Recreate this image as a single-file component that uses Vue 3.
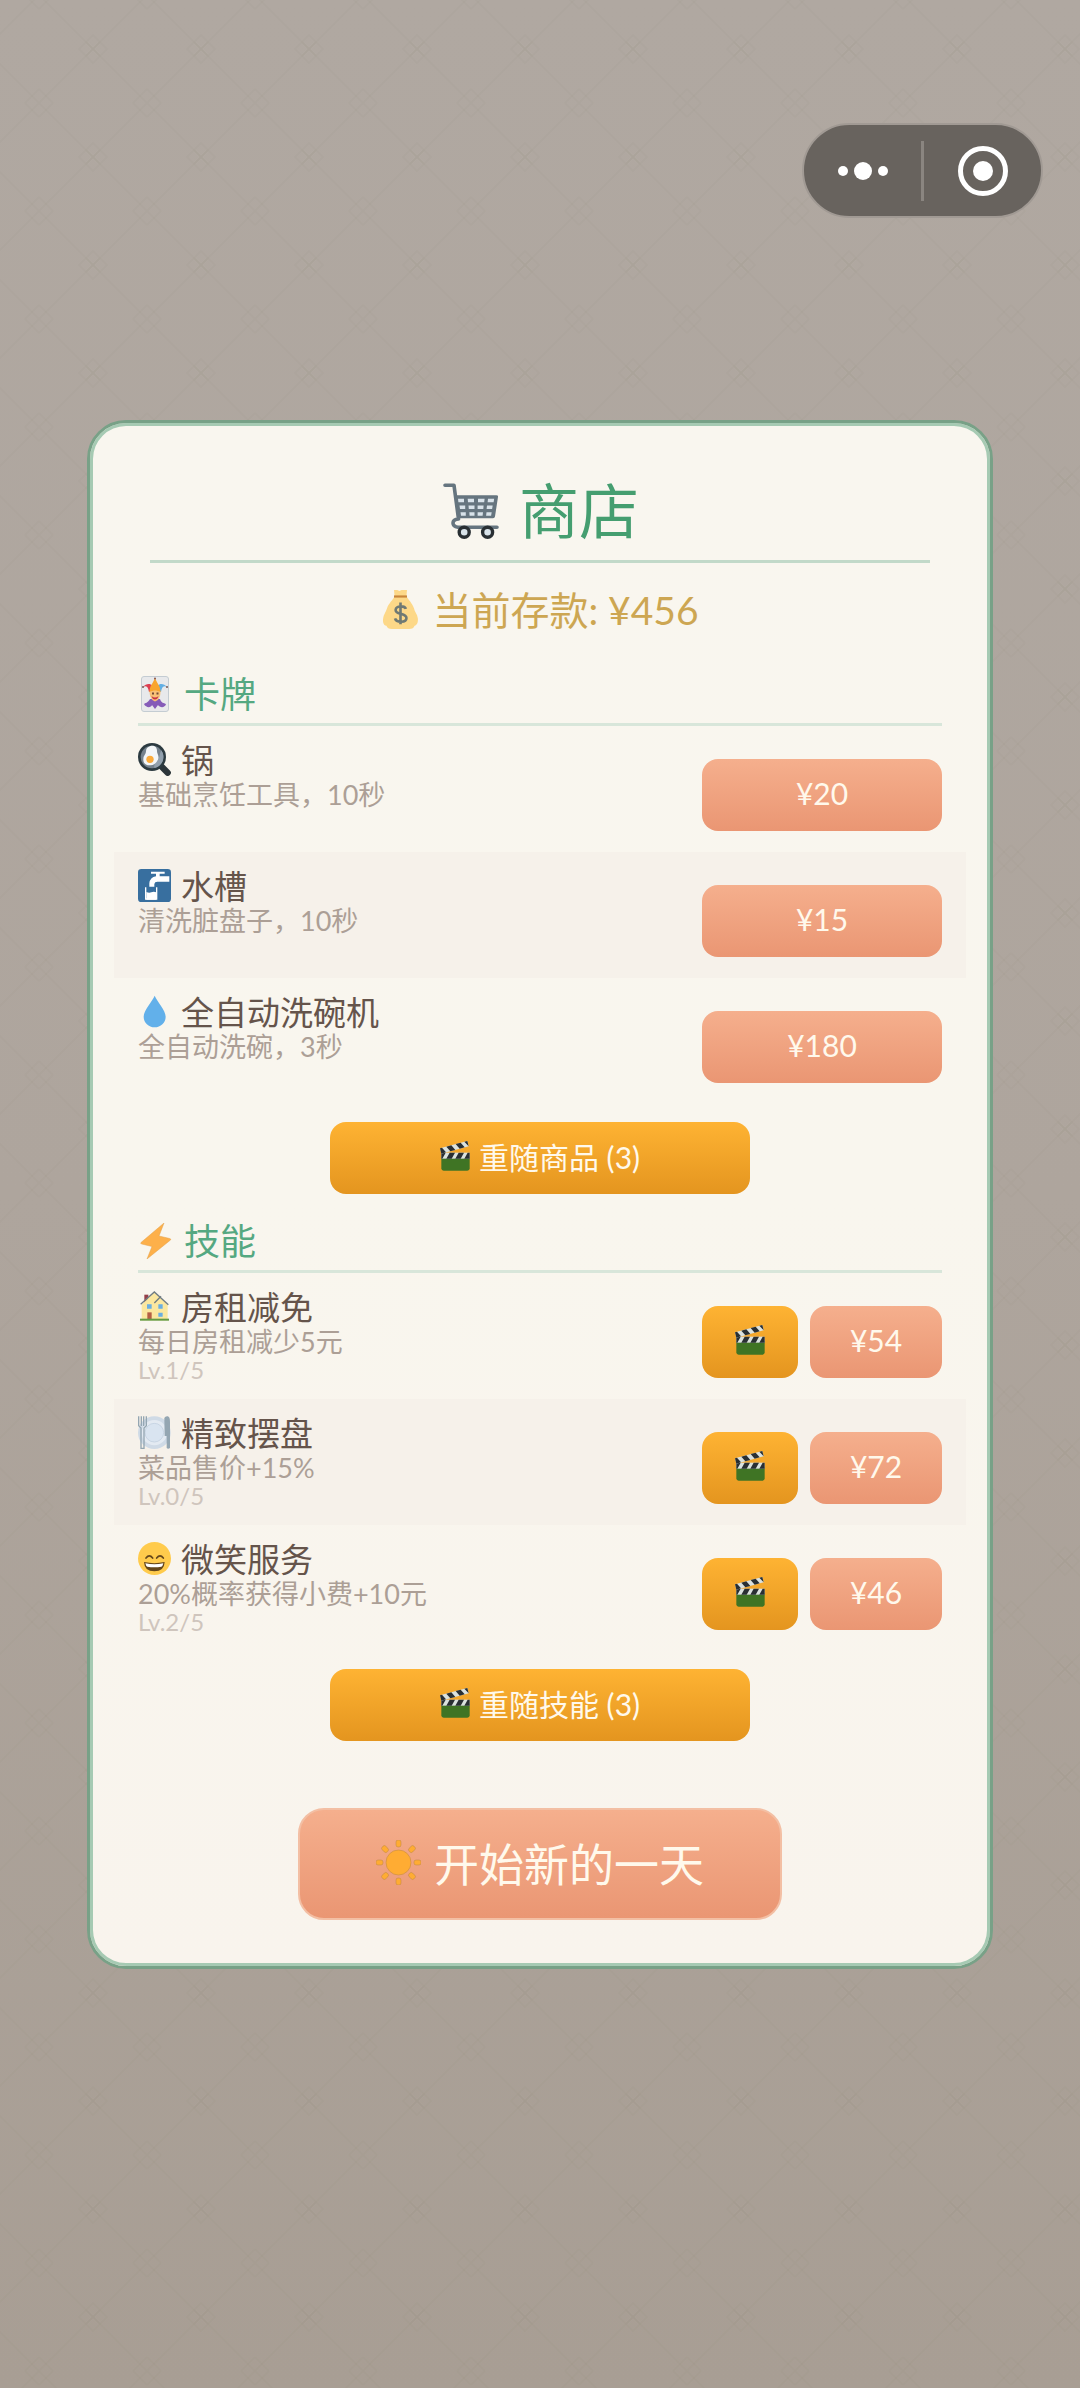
<script setup>
import { ref } from 'vue'

const balance = ref(456)
const rerolls = ref(3)

const cards = [
  { icon: 'pan', name: '锅', desc: '基础烹饪工具，10秒', price: 20 },
  { icon: 'tap', name: '水槽', desc: '清洗脏盘子，10秒', price: 15 },
  { icon: 'drop', name: '全自动洗碗机', desc: '全自动洗碗，3秒', price: 180 },
]

const skills = [
  { icon: 'house', name: '房租减免', desc: '每日房租减少5元', level: 'Lv.1/5', price: 54 },
  { icon: 'plate', name: '精致摆盘', desc: '菜品售价+15%', level: 'Lv.0/5', price: 72 },
  { icon: 'smile', name: '微笑服务', desc: '20%概率获得小费+10元', level: 'Lv.2/5', price: 46 },
]
</script>

<template>
  <div class="page">
    <svg class="sprites" aria-hidden="true">
      <symbol id="cart" viewBox="0 0 60 60">
        <path d="M4 4.300H13L17.500 38Q12 38.500 12 42T17 46.300H56" fill="none" stroke="#66757f" stroke-width="3.600" stroke-linecap="round" stroke-linejoin="round" />
        <path d="M15 14.300H55.500Q57.300 14.300 57 16L54 35.500Q53.700 37.300 52 37.300H18Z" fill="#66757f" />
        <path fill="#d9e3ea" d="M17 17.700h6v3.500h-5.600zM26.700 17.700h6.300v3.500h-6zM37 17.700h6.600l-.4 3.500H37zM47 17.700h6.200l-.6 3.500h-6zM18.500 24.500h5.700V28H19zM27.500 24.500h6V28h-5.700zM36.600 24.500h6l-.3 3.500h-5.700zM46 24.500h5.700l-.6 3.500h-5.500zM19.500 31.200h5.300v3.500H20zM28.300 31.200h5.200v3.500h-4.900zM36.600 31.200H42l-.4 3.500h-5zM45.500 31.200h5.200l-.6 3.500h-5z" />
        <circle cx="23.200" cy="51.300" r="5" fill="#d9e3ea" stroke="#292f33" stroke-width="3.400" />
        <circle cx="46.600" cy="51.300" r="5" fill="#d9e3ea" stroke="#292f33" stroke-width="3.400" />
      </symbol>
      <symbol id="bag" viewBox="0 0 36 36">
        <path d="M12 0h3l2 1 2-1h5l-.5 5.500C25 9 29 12 30.500 17c.4 3 3 5 3.500 9 .5 4-1 6.500-3 7-1 2.500-3 3-5 3H10c-3 0-4-1-5-3-3-.5-3.500-4-3-7 .3-3 2.500-6 3.500-9C7 12 11.500 9 12.500 5.500Z" fill="#fdd888" />
        <path d="M12 5h12v2H12z" fill="#c9863b" />
        <path d="M23 17.500c-1-3-9-3.500-9.500.8-.4 4.700 10 2.700 10 7.600 0 4.500-9.500 4.500-10.500.3M18 11.500v20" fill="none" stroke="#6f7974" stroke-width="2.400" />
      </symbol>
      <symbol id="joker" viewBox="0 0 36 36">
        <rect x="3.500" y=".5" width="27" height="35" rx="2.500" fill="#e8e9eb" stroke="#c4ccd2" />
        <path d="M16 15C16 7 9 6 5 11c4-2 5 0 6 5Z" fill="#dd3d50" />
        <path d="M18 15c0-8 7-9 11-4-4-2-5 0-6 5Z" fill="#62afe4" />
        <circle cx="5" cy="11" r="1" fill="#77544f" /><circle cx="29" cy="11" r="1" fill="#77544f" />
        <path d="M12 23c-2 4-5 4-6 5 2 4 7 4 8 1l3 4 3-4c2 3 7 3 8-1-2-1-5-1-6-5Z" fill="#855bb8" />
        <path d="M11.500 15q5-3 11 0c0 5-1 9-5.500 10.500C13 24 11.500 20 11.500 15Z" fill="#f8c078" />
        <path d="M11.500 16C12 9 14 9 17 2c3 7 5 7 5.500 14-4-2-7-2-11 0Z" fill="#f9a52e" />
        <path d="M13.500 20q3.500 3 7 0-1 3.500-3.500 3.500T13.500 20Z" fill="#c93143" />
        <path d="M14 16.500h2v2h-2zM18.500 16.500h2v2h-2z" fill="#754a35" /><circle cx="17" cy="2.500" r="1" fill="#87544c" />
      </symbol>
      <symbol id="bolt" viewBox="0 0 36 36">
        <path d="M26 0 3 19.500q-1 1 .8 1.500L14 23.500 9 36 32.500 17q1-1-.8-1.500L21 13Z" fill="#fdb04a" stroke="#e2a04a" stroke-width=".5" />
      </symbol>
      <symbol id="pan" viewBox="0 0 99 99">
        <path d="m72 72 17 17" stroke="#2c353a" stroke-width="19" stroke-linecap="round" />
        <circle cx="42" cy="42" r="42" fill="#2c3a40" /><circle cx="42" cy="42" r="34" fill="#75828d" />
        <path d="M70 22a34 34 0 0 1-20 53q-5-8 5-18c13-11 8-24 15-35" fill="#92a0ad" />
        <path d="M37 9c12-3 21 4 20 16 0 9 8 15 3 25-4 7-10 17-22 17C24 68 15 61 16 48c1-12 7-12 8-23 0-8 4-13 13-16Z" fill="#f3f6f8" />
        <circle cx="36" cy="49" r="11" fill="#faab3d" />
      </symbol>
      <symbol id="tap" viewBox="0 0 99 99">
        <rect width="99" height="99" rx="10" fill="#386f9f" />
        <path d="M34 53V43q2-18 20-21V14H39V8h41v6H65v8h29v16H58q-8 0-9 7v8Z" fill="#fff" />
        <path d="M23 55v35h33V55" fill="none" stroke="#fff" stroke-width="4" /><path d="M25 69q8 4 15 1t15 0v22H25Z" fill="#fff" />
      </symbol>
      <symbol id="drop" viewBox="0 0 99 99">
        <path d="M50 2C43 19 17 45 17 65c0 18 15 32 33 32s33-14 33-32C83 45 57 19 50 2Z" fill="#62b0ea" />
      </symbol>
      <symbol id="clapper" viewBox="0 0 90 90">
        <path d="M4 48h85v34q0 7-7 7H11q-7 0-7-7Z" fill="#3f7424" />
        <path d="M4 35h85v18H4z" fill="#dbe2df" />
        <path d="M4 35h13L7 53H4zM29 35h16L35 53H19zM56 35h16L62 53H46zM83 35h6v18H73z" fill="#292f33" />
        <path d="M0 22 82 0l4 16L4 38Z" fill="#dbe2df" />
        <path d="m0 22 6-2 12 14-14 4zM19 17l15-4 12 14-15 4zM47 9l15-4 12 14-15 4zM73 2l9-2 4 16Z" fill="#292f33" />
      </symbol>
      <symbol id="house" viewBox="0 0 99 99">
        <path d="M19 14h12v28H19z" fill="#963f48" /><path d="M11 44 49 7l40 37v47H11Z" fill="#fbe79f" />
        <path d="m8 43 41-37 42 38M49 39l20-20" fill="none" stroke="#707c83" stroke-width="4" />
        <path d="M27 43h14v13H27zM61 43h13v13H61zM61 68h13v12H61z" fill="#6aaee1" /><path d="M28 67h13v20H28z" fill="#b55f45" />
        <path d="M6 86h87v6H6z" fill="#649b43" />
      </symbol>
      <symbol id="plate" viewBox="0 0 99 99">
        <circle cx="49" cy="50" r="49" fill="#cfdae6" /><circle cx="49" cy="50" r="38" fill="#e3eaf2" /><circle cx="49" cy="50" r="28" fill="#d9e4f0" stroke="#bdcbdc" stroke-width="2" />
        <path d="M2 1v28l7 7v61h9V36l7-7V1M10 1v29M17 1v29" fill="none" stroke="#94a6b2" stroke-width="4" />
        <path d="M79 6q3-6 10-5 7 1 7 17v78q-6 5-10 0V60h-6Z" fill="#94a6b2" />
      </symbol>
      <symbol id="smile" viewBox="0 0 99 99">
        <circle cx="49.500" cy="49.500" r="49.500" fill="#ffcb4c" />
        <path d="M24 48q10-13 20 0M56 48q10-13 20 0" fill="none" stroke="#65471b" stroke-width="5" stroke-linecap="round" />
        <path d="M18 60q31 7 62 0-1 28-31 28T18 60Z" fill="#65471b" /><path d="M22 64q27 6 54 0-2 9-6 10-21 4-42 0-4-1-6-10Z" fill="#fff" />
      </symbol>
      <symbol id="sun" viewBox="0 0 90 90">
        <g fill="#ffac33" stroke="#bd8740" stroke-width="1">
          <circle cx="45" cy="45" r="25" />
          <rect v-for="n in 8" :key="n" x="40" y="0" width="10" height="14" rx="4" :transform="`rotate(${n * 45} 45 45)`" />
        </g>
      </symbol>
    </svg>

    <nav class="capsule" aria-label="小程序">
      <button class="capsule-btn" type="button" aria-label="更多">
        <svg width="52" height="20" viewBox="0 0 52 20" fill="#fff"><circle cx="6" cy="10" r="5" /><circle cx="26" cy="10" r="9" /><circle cx="46" cy="10" r="5" /></svg>
      </button>
      <button class="capsule-btn" type="button" aria-label="关闭">
        <svg width="50" height="50" viewBox="0 0 50 50"><circle cx="25" cy="25" r="22.500" fill="none" stroke="#fff" stroke-width="5" /><circle cx="25" cy="25" r="10" fill="#fff" /></svg>
      </button>
    </nav>

    <main class="shop">
      <h1 class="title"><svg class="icon"><use href="#cart" /></svg>商店</h1>
      <p class="balance"><svg class="icon"><use href="#bag" /></svg>当前存款: ¥{{ balance }}</p>

      <section class="group">
        <h2 class="group-title"><svg class="icon"><use href="#joker" /></svg>卡牌</h2>
        <ul class="list">
          <li v-for="item in cards" :key="item.name" class="row">
            <div class="info">
              <h3 class="name"><svg class="icon"><use :href="'#' + item.icon" /></svg>{{ item.name }}</h3>
              <p class="desc">{{ item.desc }}</p>
            </div>
            <div class="actions">
              <button class="btn buy wide" type="button">¥{{ item.price }}</button>
            </div>
          </li>
        </ul>
        <button class="btn reroll" type="button"><svg class="icon"><use href="#clapper" /></svg>重随商品 ({{ rerolls }})</button>
      </section>

      <section class="group">
        <h2 class="group-title"><svg class="icon"><use href="#bolt" /></svg>技能</h2>
        <ul class="list">
          <li v-for="item in skills" :key="item.name" class="row">
            <div class="info">
              <h3 class="name"><svg class="icon"><use :href="'#' + item.icon" /></svg>{{ item.name }}</h3>
              <p class="desc">{{ item.desc }}</p>
              <p class="level">{{ item.level }}</p>
            </div>
            <div class="actions">
              <button class="btn watch" type="button" aria-label="观看视频"><svg class="icon"><use href="#clapper" /></svg></button>
              <button class="btn buy" type="button">¥{{ item.price }}</button>
            </div>
          </li>
        </ul>
        <button class="btn reroll" type="button"><svg class="icon"><use href="#clapper" /></svg>重随技能 ({{ rerolls }})</button>
      </section>

      <button class="start" type="button"><svg class="icon"><use href="#sun" /></svg>开始新的一天</button>
    </main>
  </div>
</template>

<style>
body {
  margin: 0;
}
</style>

<style scoped>
.page {
  position: relative;
  box-sizing: border-box;
  min-height: 100vh;
  padding: 0 87px;
  display: flex;
  flex-direction: column;
  justify-content: center;
  font-family: Lato, "Noto Sans CJK SC", sans-serif;
  background-color: #aca399;
  background-image:
    url("data:image/svg+xml,%3Csvg xmlns='http://www.w3.org/2000/svg' width='108' height='108'%3E%3Cg fill='none' stroke='%23665a50' stroke-opacity='.03' stroke-width='2'%3E%3Cpath d='M0 0 108 108M108 0 0 108'/%3E%3Cpath d='M54 40 68 54 54 68 40 54ZM47 47l14 14M61 47 47 61M0 14 14 0M94 0l14 14M0 94l14 14M94 108l14-14'/%3E%3C/g%3E%3C/svg%3E"),
    linear-gradient(#b0a8a1, #aea59d 50%, #a89e94);
  background-position: 39px -5px, 0 0;
}

.sprites {
  position: absolute;
  width: 0;
  height: 0;
}

h1,
h2,
h3,
p,
ul {
  margin: 0;
  padding: 0;
  font-weight: 400;
}

button {
  padding: 0;
  border: 0;
  font-family: inherit;
  cursor: pointer;
}

.icon {
  flex: none;
  width: 1em;
  height: 1em;
}

.capsule {
  position: absolute;
  top: 123px;
  right: 37px;
  box-sizing: border-box;
  width: 241px;
  height: 95px;
  display: flex;
  align-items: center;
  border: 2px solid #a19a94;
  border-radius: 48px;
  background: #68635e;
}

.capsule-btn {
  flex: 1;
  height: 60px;
  display: flex;
  align-items: center;
  justify-content: center;
  background: none;
}

.capsule-btn + .capsule-btn {
  border-left: 3px solid #8a8580;
}

.shop {
  display: flex;
  flex-direction: column;
  padding: 52px 0 46px;
  border: 3px solid #78a187;
  border-radius: 39px;
  background: linear-gradient(#f9f6ef, #f9f6ee 50%, #f9f4ed);
  box-shadow: inset 0 0 0 3px #a6cab3;
}

.title {
  display: flex;
  align-items: center;
  justify-content: center;
  gap: 18px;
  margin: 0 60px;
  padding-bottom: 13px;
  border-bottom: 3px solid #c2d9c9;
  color: #459e70;
  font-size: 60px;
  line-height: 72px;
}

.balance {
  display: flex;
  align-items: center;
  justify-content: center;
  gap: 12px;
  margin: 23px 0 13px;
  color: #cda652;
  font-size: 39px;
  line-height: 48px;
}

.group {
  display: flex;
  flex-direction: column;
  margin-top: 23px;
}

.group-title {
  display: flex;
  align-items: center;
  gap: 10px;
  margin: 0 48px;
  padding-bottom: 5px;
  border-bottom: 3px solid #d8e6da;
  color: #55a881;
  font-size: 36px;
  line-height: 48px;
}

.list {
  margin: 0 24px;
  list-style: none;
}

.row {
  box-sizing: border-box;
  min-height: 126px;
  padding: 0 24px;
  display: flex;
  align-items: center;
  justify-content: space-between;
}

.row:nth-child(even) {
  background: #f6f1ea;
}

.info {
  align-self: flex-start;
  padding-top: 16px;
}

.name {
  display: flex;
  align-items: center;
  gap: 10px;
  color: #65544b;
  font-size: 33px;
  line-height: 36px;
}

.desc {
  color: #ac9f96;
  font-size: 27px;
  line-height: 34px;
}

.level {
  color: #cfc5bd;
  font-size: 24px;
  line-height: 22px;
}

.actions {
  display: flex;
  gap: 12px;
  padding-top: 12px;
}

.btn {
  height: 72px;
  padding-bottom: 3px;
  display: flex;
  align-items: center;
  justify-content: center;
  gap: 9px;
  border-radius: 16px;
  color: #fff9ec;
  font-size: 30px;
}

.buy {
  width: 132px;
  background: linear-gradient(#f5af8d, #ea9673);
}

.wide {
  width: 240px;
}

.watch {
  width: 96px;
}

.watch,
.reroll {
  background: linear-gradient(#feb333, #e4951f);
}

.reroll {
  width: 420px;
  margin-top: 18px;
  align-self: center;
}

.start {
  box-sizing: border-box;
  align-self: center;
  width: 484px;
  height: 112px;
  margin-top: 67px;
  padding-bottom: 3px;
  display: flex;
  align-items: center;
  justify-content: center;
  gap: 13px;
  border: 2px solid #f3bfa4;
  border-radius: 26px;
  background: linear-gradient(#f5af8d, #ea9673);
  color: #fff9ec;
  font-size: 45px;
}
</style>
